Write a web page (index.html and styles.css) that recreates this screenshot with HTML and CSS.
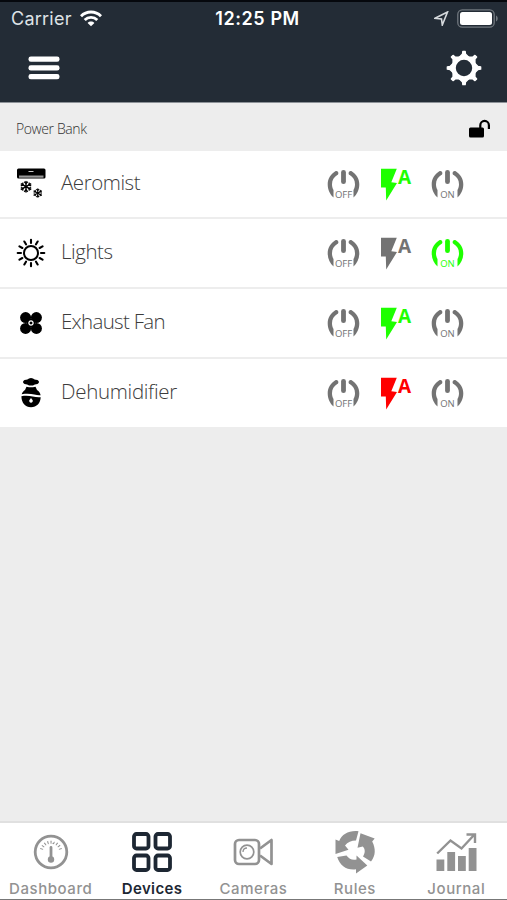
FILE: index.html
```html
<!DOCTYPE html>
<html lang="en">
<head>
    <meta charset="utf-8">
    <title>Devices</title>
    <link rel="stylesheet" href="styles.css">
</head>
<body>
    <!-- shared icons -->
    <svg class="sprite" width="0" height="0">
        <symbol id="power" viewBox="0 0 33 34">
            <path d="M16.5 4.300v9.400" fill="none" stroke="currentColor" stroke-width="4.800" stroke-linecap="round"/>
            <path d="M8.300 3.200C3.700 6 .7 10.800 .7 16.200c0 5.400 2.200 10.100 5.800 13.300V22C5.300 19.800 5 18 5 16.200c0-3.900 2-7.200 5.300-9.100C12.600 5.700 11 1.800 8.300 3.200z" fill="currentColor"/>
            <path d="M24.700 3.200c4.600 2.800 7.600 7.600 7.600 13 0 5.400-2.200 10.100-5.800 13.300V22c1.200-2.200 1.500-4 1.500-5.800 0-3.900-2-7.200-5.300-9.100-2.300-1.400-.7-5.300 2-3.900z" fill="currentColor"/>
        </symbol>
        <symbol id="bolt" viewBox="0 0 32 34">
            <path d="M0 .7h15.800L10.300 14.200l5.700.8L5.200 32.500 4.800 19.500H0z" fill="currentColor"/>
        </symbol>
        <symbol id="flake" viewBox="-6 -6 12 12">
            <g fill="none" stroke="#000" stroke-width="1.400">
                <path d="M0-6V6M-5.200-3 5.200 3M-5.200 3 5.200-3"/>
                <path d="M-1.800-5 0-3.300 1.800-5M-1.800 5 0 3.300 1.800 5M-5.200-.9-2.900-1.600-3.400-4M5.200.9 2.900 1.600 3.400 4M-5.200.9-2.900 1.600-3.400 4M5.200-.9 2.900-1.600 3.400-4"/>
            </g>
        </symbol>
    </svg>

    <header>
        <div class="status">
            <div class="carrier">
                <span>Carrier</span>
                <svg width="22" height="17" viewBox="0 0 22 17" fill="none" stroke="#fff" stroke-width="2.900">
                    <path d="M1 6.200C6.500.6 15.500.6 21 6.200"/>
                    <path d="M4.700 10c3.500-3.500 9.100-3.500 12.600 0"/>
                    <path d="M11 16.300 7.600 13c1.900-1.900 4.900-1.900 6.800 0z" fill="#fff" stroke="none"/>
                </svg>
            </div>
            <span class="time">12:25 PM</span>
            <div class="battery">
                <svg width="15" height="15" viewBox="0 0 15 15"><path d="M1 7.300 13.500 1 8.300 14 7.500 7.900z" fill="none" stroke="#d5d9dc" stroke-width="1.600"/></svg>
                <svg width="42" height="19" viewBox="0 0 42 19">
                    <rect x=".8" y=".8" width="36.400" height="17.400" rx="4.500" fill="none" stroke="#70777e" stroke-width="1.300"/>
                    <rect x="3" y="3" width="32" height="13" rx="2.500" fill="#fff"/>
                    <path d="M39 6.500c2.300 1 2.300 5 0 6z" fill="#70777e"/>
                </svg>
            </div>
        </div>
        <nav class="toolbar">
            <svg width="32" height="24" viewBox="0 0 32 24" fill="#fff">
                <rect x=".5" y=".5" width="31" height="5.300" rx="2.300"/>
                <rect x=".5" y="9.200" width="31" height="5.300" rx="2.300"/>
                <rect x=".5" y="17.900" width="31" height="5.300" rx="2.300"/>
            </svg>
            <svg width="36" height="36" viewBox="-18 -18 36 36">
                <circle r="10.300" fill="none" stroke="#fff" stroke-width="4.200"/>
                <g fill="#fff" stroke="#fff" stroke-width="1.300" stroke-linejoin="round">
                    <path id="tooth" d="M-4.500-11-1.500-14-1.200-16.700H1.200L1.500-14 4.500-11z"/>
                    <use href="#tooth" transform="rotate(45)"/>
                    <use href="#tooth" transform="rotate(90)"/>
                    <use href="#tooth" transform="rotate(135)"/>
                    <use href="#tooth" transform="rotate(180)"/>
                    <use href="#tooth" transform="rotate(225)"/>
                    <use href="#tooth" transform="rotate(270)"/>
                    <use href="#tooth" transform="rotate(315)"/>
                </g>
            </svg>
        </nav>
    </header>

    <main>
        <div class="group">
            <span>Power Bank</span>
            <svg width="22" height="19" viewBox="0 0 22 19">
                <rect x="0" y="8.500" width="15" height="10" rx="1.500"/>
                <path d="M11.300 9V6.200a4.300 4.300 0 0 1 8.600 0V10" fill="none" stroke="#000" stroke-width="2.200"/>
            </svg>
        </div>

        <ul class="devices">
            <li>
                <svg class="icon" width="30" height="32" viewBox="0 0 30 32">
                    <rect x="1" y=".5" width="28.500" height="10" rx="1.500"/>
                    <path d="M12.500 3.500h5" stroke="#ccc" stroke-width="1"/>
                    <path d="M3 9.700V7.500h24.500v2.200z" fill="#999"/>
                    <use href="#flake" x="4" y="12.700" width="12" height="12"/>
                    <use href="#flake" x="17" y="20.300" width="9.500" height="9.500"/>
                </svg>
                <span class="name">Aeromist</span>
                <span class="switch"><svg><use href="#power"/></svg><b>OFF</b></span>
                <span class="auto green"><svg><use href="#bolt"/></svg><b>A</b></span>
                <span class="switch"><svg><use href="#power"/></svg><b>ON</b></span>
            </li>
            <li>
                <svg class="icon" width="30" height="32" viewBox="-15 -16 30 32">
                    <circle r="7" fill="none" stroke="#000" stroke-width="2"/>
                    <g stroke="#000" stroke-width="2.100" stroke-linecap="round">
                        <path d="M0-10V-13.300M0 10v3.300M-10 0h-3.300M10 0h3.300"/>
                        <path d="M0-10V-13.300M0 10v3.300M-10 0h-3.300M10 0h3.300" transform="rotate(30)"/>
                        <path d="M0-10V-13.300M0 10v3.300M-10 0h-3.300M10 0h3.300" transform="rotate(60)"/>
                    </g>
                </svg>
                <span class="name">Lights</span>
                <span class="switch"><svg><use href="#power"/></svg><b>OFF</b></span>
                <span class="auto"><svg><use href="#bolt"/></svg><b>A</b></span>
                <span class="switch green"><svg><use href="#power"/></svg><b>ON</b></span>
            </li>
            <li>
                <svg class="icon" width="30" height="32" viewBox="-15 -16 30 32">
                    <circle cx="-5.400" cy="-5.400" r="5.500"/>
                    <circle cx="5.400" cy="-5.400" r="5.500"/>
                    <circle cx="-5.400" cy="5.400" r="5.500"/>
                    <circle cx="5.400" cy="5.400" r="5.500"/>
                    <circle r="4.300"/>
                    <circle r="2.100" stroke="#fff" stroke-width="1.300"/>
                </svg>
                <span class="name tight">Exhaust Fan</span>
                <span class="switch"><svg><use href="#power"/></svg><b>OFF</b></span>
                <span class="auto green"><svg><use href="#bolt"/></svg><b>A</b></span>
                <span class="switch"><svg><use href="#power"/></svg><b>ON</b></span>
            </li>
            <li>
                <svg class="icon" width="30" height="32" viewBox="-15 -16 30 32">
                    <path d="M-6.500-13C-4-13.300-3-13.600-2-14.500Q0-15.600 2-14.500C3-13.600 4-13.300 6.500-13Q9.500-11 6.500-9C4.500-8.800 3-8.500 2-7.400H-2C-3-8.500-4.500-8.800-6.500-9Q-9.500-11-6.500-13z"/>
                    <path d="M-4.500-6.300-2-5.800H2L4.500-6.300 6-3C8-1.800 9.300.2 9.600 2.200 5 2.800 1-.5-9.300 1.200-8.500-.8-7.500-2.200-6-3z"/>
                    <path d="M-9.600 3.200C-1 1.500 3 4.900 9.700 4.200 9.500 10 5.700 14.200 0 14.200S-9.500 10-9.600 3.200z"/>
                    <path d="M0 5 1.700 7.300A1.800 1.800 0 1 1-1.700 7.300z" fill="#fff"/>
                </svg>
                <span class="name wide">Dehumidifier</span>
                <span class="switch"><svg><use href="#power"/></svg><b>OFF</b></span>
                <span class="auto red"><svg><use href="#bolt"/></svg><b>A</b></span>
                <span class="switch"><svg><use href="#power"/></svg><b>ON</b></span>
            </li>
        </ul>
    </main>

    <footer>
        <a class="tab">
            <svg width="44" height="44" viewBox="-22 -22 44 44">
                <circle r="15.800" fill="none" stroke="#929292" stroke-width="2.800"/>
                <path d="M0-4.500V7" stroke="#929292" stroke-width="2.800" stroke-linecap="round"/>
                <circle cy="7.500" r="3.200" fill="#929292"/>
                <circle r="9.800" fill="none" stroke="#929292" stroke-width="3" pathLength="360" stroke-dasharray="6 12 6 12 6 12 6 12 6 12 6 12 6 12 6 12 6 210" transform="rotate(195)"/>
            </svg>
            <span>Dashboard</span>
        </a>
        <a class="tab active">
            <svg width="44" height="44" viewBox="-22 -22 44 44" fill="none" stroke="#1d2733" stroke-width="3.800">
                <rect x="-18" y="-18" width="14.500" height="14.500" rx="2.500"/>
                <rect x="3.500" y="-18" width="14.500" height="14.500" rx="2.500"/>
                <rect x="-18" y="3.500" width="14.500" height="14.500" rx="2.500"/>
                <rect x="3.500" y="3.500" width="14.500" height="14.500" rx="2.500"/>
            </svg>
            <span>Devices</span>
        </a>
        <a class="tab">
            <svg width="44" height="44" viewBox="-22 -22 44 44" fill="none" stroke="#929292" stroke-width="2.700">
                <rect x="-18" y="-12" width="24" height="24" rx="4"/>
                <path d="M7-3.500 18.500-12V12L7 3.500" stroke-linejoin="round"/>
                <circle cx="-6" r="6.800" stroke-width="1.700"/>
                <path d="M-10 0q0-4 4-4" stroke-width="1.300"/>
            </svg>
            <span>Cameras</span>
        </a>
        <a class="tab">
            <svg width="44" height="44" viewBox="-22 -22 44 44" fill="#929292">
                <path d="M3.500-20.800C-6-21.800-13-18-15.800-11L-19.500-12.500V2L-6.500-2.200-10-6.500C-7.500-10-3.500-11.500 1-11.500z"/>
                <path d="M5.500-18.800 19.700-13.500 17.200-10.500C20.800-3.500 20.800 3.500 16 9.500L8 4.500C10.500.5 10.200-3 7.800-5.500L2.500-4.200z"/>
                <path d="M-17.800 5-8.500 3.500C-6 7-2.500 8.500 1.500 7.500V3.500L12.300 13.500 1 21.500V17.300C-8 18.500-15 14-17.800 5z"/>
            </svg>
            <span>Rules</span>
        </a>
        <a class="tab">
            <svg width="44" height="44" viewBox="-22 -22 44 44" fill="#929292">
                <rect x="-19.500" y="7.500" width="7.800" height="11.500"/>
                <rect x="-8.700" y="0" width="7.800" height="19"/>
                <rect x="2" y="4" width="7.800" height="15"/>
                <rect x="12.700" y="-4" width="7.800" height="23"/>
                <path d="M-18.800 1.500-5.500-11.500 5.500-3.500 18.500-17.500M10.500-17.500H19V-9" fill="none" stroke="#929292" stroke-width="2.400"/>
            </svg>
            <span>Journal</span>
        </a>
    </footer>
</body>
</html>
```

FILE: styles.css
```css
* {
    box-sizing: border-box;
}

body {
    margin: 0;
    height: 900px;
    display: flex;
    flex-direction: column;
    overflow: hidden;
    background-color: #ededed;
    font-family: Inter, "Liberation Sans", sans-serif;
}

svg {
    display: block;
}

.sprite {
    position: absolute;
}

header {
    height: 103px;
    background-color: #232c36;
    border-top: 2px solid #05080d;
    border-bottom: 1px solid #8d9298;
    color: #fff;
}

.status {
    display: grid;
    grid-template-columns: 1fr auto 1fr;
    align-items: center;
    height: 32px;
    padding: 0 8px 0 11px;
    font-size: 18px;
}

.carrier {
    display: flex;
    align-items: center;
    gap: 8px;
    color: #dfe3e6;
    letter-spacing: 0.25px;
}

.time {
    font-weight: 600;
    letter-spacing: 0.6px;
    padding-left: 5px;
}

.battery {
    display: flex;
    justify-content: flex-end;
    align-items: center;
    gap: 8px;
}

.toolbar {
    display: flex;
    justify-content: space-between;
    align-items: center;
    height: 67px;
    padding: 0 25px 0 28px;
}

main {
    flex: 1;
}

.group {
    display: flex;
    justify-content: space-between;
    align-items: center;
    height: 48px;
    padding: 2px 16px 0 16px;
    font-family: "Open Sans", sans-serif;
    font-size: 14px;
    font-weight: 300;
    letter-spacing: -0.4px;
    color: #333;
}

.devices {
    list-style: none;
    margin: 0;
    padding: 0;
    background-color: #fff;
}

.devices li {
    display: grid;
    grid-template-columns: 45px 266px 54px 50px 34px;
    height: 70px;
    padding: 18px 0 0 16px;
    border-bottom: 2px solid #ededed;
}

.devices li:first-child {
    height: 68px;
    padding-top: 17px;
}

.devices li:last-child {
    height: 68px;
    border-bottom: none;
}

.name {
    font-family: "Open Sans", sans-serif;
    font-size: 20.5px;
    font-weight: 300;
    line-height: 29px;
    letter-spacing: -0.45px;
    color: #3c3c3c;
}

.tight {
    letter-spacing: -0.7px;
}

.wide {
    letter-spacing: -0.3px;
}

.switch,
.auto {
    display: grid;
    height: 34px;
    color: #737373;
}

.switch {
    width: 33px;
}

.auto {
    width: 32px;
}

.switch svg,
.switch b,
.auto svg,
.auto b {
    grid-area: 1 / 1;
}

.switch svg {
    width: 33px;
    height: 34px;
}

.auto svg {
    width: 32px;
    height: 34px;
}

.switch b {
    align-self: end;
    justify-self: center;
    font: 9.5px/10px "Open Sans", sans-serif;
    padding-bottom: 2px;
}

.auto b {
    justify-self: end;
    font: bold 19px/19px "Open Sans", sans-serif;
    padding-right: 2px;
}

.green {
    color: #1eff00;
}

.red {
    color: #ff0000;
}

footer {
    display: grid;
    grid-template-columns: repeat(5, 1fr);
    height: 79px;
    background-color: #fff;
    border-top: 2px solid #e0e0e0;
    border-bottom: 1px solid #777;
}

.tab {
    display: flex;
    flex-direction: column;
    align-items: center;
    padding-top: 7px;
    color: #929292;
    font-size: 15px;
    font-weight: 500;
    letter-spacing: 0.55px;
    line-height: 30px;
}

.active {
    color: #1d2733;
    font-weight: 600;
    letter-spacing: 0.4px;
}
```
